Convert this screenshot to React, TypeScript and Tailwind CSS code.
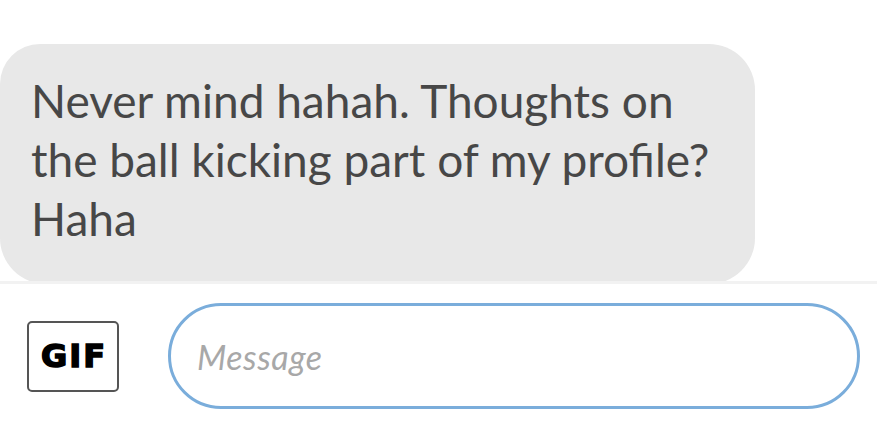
export default function App() {
  return (
    <div className="w-[877px] h-[427px] bg-white overflow-hidden flex flex-col font-['Lato','Noto_Sans',sans-serif]">
      {/* Message thread */}
      <div className="h-[281px] overflow-hidden pt-[44px]">
        <div className="w-[755px] h-[240px] bg-[#e8e8e8] rounded-[46px] rounded-tl-[40px] pl-[31px] pr-[30px] pt-[27px] text-[46px] leading-[59px] text-[#474747]">
          <span className="block whitespace-nowrap">Never mind hahah. Thoughts on</span>
          <span className="block whitespace-nowrap">the ball kicking part of my profile?</span>
          <span className="block whitespace-nowrap">Haha</span>
        </div>
      </div>

      {/* Composer */}
      <div className="h-[3px] bg-[#f2f2f2]" />
      <div className="flex items-center pl-[27px] pt-[19px]">
        <button className="w-[92px] h-[71px] border-[2.5px] border-[#555] rounded-[5px] flex items-center justify-center">
          <span className="font-['DejaVu_Sans',sans-serif] font-black text-[32px] leading-none text-black tracking-[2px] pl-[2px] [-webkit-text-stroke:1.5px_black]">
            GIF
          </span>
        </button>
        <div className="ml-[49px] w-[692px] h-[106px] border-[3px] border-[#7aaddb] rounded-full flex items-center pl-[26px]">
          <span className="italic text-[34px] tracking-[0.5px] text-[#a8a8a8]">Message</span>
        </div>
      </div>
    </div>
  )
}
